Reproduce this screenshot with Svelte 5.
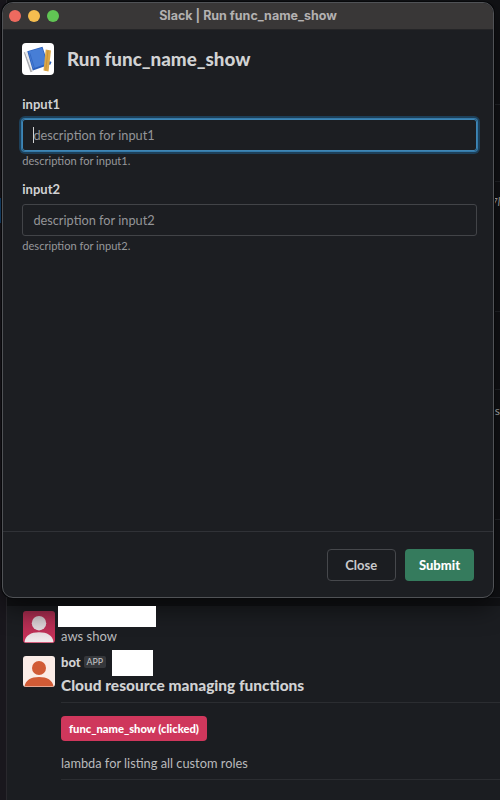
<script>
  const fields = [
    { id: 'input1', hint: 'description for input1', focused: true },
    { id: 'input2', hint: 'description for input2', focused: false }
  ];
</script>

<main class="desktop">
  <aside class="rail"><span class="selected"></span></aside>
  <section class="chat">
    <div class="behind">
      <span class="rule r1"></span>
      <span class="rule r2"></span>
      <span class="scrap s1">7l</span>
      <span class="scrap s2">s</span>
      <span class="rule r4"></span>
      <span class="rule r5"></span>
      <span class="rule r6"></span>
      <span class="rule r3"></span>
    </div>
    <article class="message first">
      <svg class="avatar" viewBox="0 0 32 32">
        <defs>
          <linearGradient id="rose" x1="0" y1="0" x2="0" y2="1">
            <stop offset="0" stop-color="#a62c4e" /><stop offset="1" stop-color="#cb3159" />
          </linearGradient>
          <linearGradient id="pale" gradientUnits="userSpaceOnUse" x1="0" y1="4" x2="0" y2="32">
            <stop offset="0" stop-color="#cbc2c6" /><stop offset="1" stop-color="#f4ebee" />
          </linearGradient>
        </defs>
        <rect width="32" height="32" rx="3" fill="url(#rose)" />
        <circle cx="16" cy="12.2" r="7.2" fill="url(#pale)" />
        <path d="M1.5 31.200C2.200 24.500 8 21.300 16 21.300S29.800 24.500 30.500 31.200Z" fill="url(#pale)" />
      </svg>
      <div class="body">
        <div class="redacted name"></div>
        <p class="text">aws show</p>
      </div>
    </article>
    <article class="message second">
      <svg class="avatar" viewBox="0 0 32 32">
        <rect width="32" height="31" rx="3" fill="#fbece7" />
        <circle cx="16" cy="12" r="7" fill="#d15b36" />
        <path d="M1.500 30.500C2.500 24 8 21 16 21S29.500 24 30.500 30.500Z" fill="#d15b36" />
      </svg>
      <div class="body">
        <div class="byline"><b>bot</b><span class="badge">APP</span><span class="redacted time"></span></div>
        <h2>Cloud resource managing functions</h2>
        <div class="action"><button class="clicked">func_name_show (clicked)</button></div>
        <p class="lambda">lambda for listing all custom roles</p>
      </div>
    </article>
  </section>

  <section class="window">
    <header class="titlebar">
      <div class="lights"><i class="red"></i><i class="yellow"></i><i class="green"></i></div>
      <span class="title">Slack | Run func_name_show</span>
    </header>
    <div class="content">
      <div class="heading">
        <svg class="app" viewBox="0 0 32 32">
          <rect width="32" height="32" rx="4" fill="#fff" />
          <path d="M1.800 9.500 3 9 10.500 28.500 8.500 29.300Z" fill="#a9abb0" />
          <path d="M3 9 5.500 8 12 26.500 10 28.500Z" fill="#e8e9eb" />
          <path d="M5.300 8.200 20.500 3.800 26.500 22 10.800 27.500Z" fill="#2b60bd" />
          <path d="M6.300 8.600 20.100 4.800 25 20.500 11 25.500Z" fill="#477ed6" />
          <path d="M7.800 10.200 12.400 25" stroke="#3469c4" stroke-width="1" />
          <path d="M27.500 18 29.500 19 28.500 21.500 26.500 22Z" fill="#2b60bd" />
          <path d="M23.700 6.500 29 7.500 26.500 28.500 21.500 27.500Z" fill="#dba746" />
          <path d="M26 7.500 23.700 27.500" stroke="#c28a31" stroke-width=".7" />
        </svg>
        <h1>Run func_name_show</h1>
      </div>
      <form>
        {#each fields as field}
          <div class="field">
            <label for={field.id}>{field.id}</label>
            <div class="control" class:focused={field.focused} id={field.id}>
              {#if field.focused}<span class="caret"></span>{/if}{field.hint}
            </div>
            <small>{field.hint}.</small>
          </div>
        {/each}
      </form>
    </div>
    <footer>
      <button class="close">Close</button>
      <button class="submit">Submit</button>
    </footer>
  </section>
</main>

<style>
  :global(body) { background: #1b1d21; }
  * { box-sizing: border-box; }
  h1, h2, p { margin: 0; }
  button { font: inherit; padding: 0; }
  .desktop {
    position: relative;
    width: 500px;
    height: 800px;
    overflow: hidden;
    display: flex;
    background: #1b1d21;
    font-family: Lato, sans-serif;
    color: #d1d2d3;
  }
  .rail { width: 7px; flex: none; background: #19171d; border-right: 1px solid #29282d; padding-top: 198px; }
  .selected { display: block; width: 4px; height: 25px; background: #164a7b; }
  .chat { flex: 1; min-width: 0; }
  .behind { position: relative; height: 606px; background: #111215; }
  .rule { position: absolute; right: 0; height: 1px; background: #222428; width: 20px; }
  .r1 { top: 104px; }
  .r2 { top: 181px; }
  .r4 { top: 311px; }
  .r5 { top: 389px; }
  .r6 { top: 519px; }
  .r3 { top: 597px; width: 493px; }
  .scrap { position: absolute; right: 0; font-size: 10.5px; line-height: 14px; color: #b4b5b7; }
  .s1 { top: 195px; font-style: italic; }
  .s2 { top: 404px; font-size: 12px; }
  .message { display: flex; padding-left: 16px; }
  .avatar { width: 32px; height: 32px; flex: none; }
  .first { height: 47px; }
  .first .avatar { margin-top: 5px; }
  .second .avatar { margin-top: 3px; }
  .body { flex: 1; padding-left: 6px; }
  .redacted { background: #fff; position: relative; z-index: 2; }
  .name { width: 98px; height: 21px; margin-left: -3px; }
  .text { font-size: 13px; line-height: 19px; color: #b9babc; }
  .byline { display: flex; height: 23px; align-items: center; font-size: 13px; line-height: 18px; margin-top: -3px; }
  .byline b { font-weight: 900; }
  .badge { margin-left: 3px; width: 22px; height: 12px; border-radius: 2px; background: #35373b; color: #c4c5c7; font-size: 8.8px; line-height: 12px; text-align: center; }
  .time { width: 41px; height: 26px; margin-left: 6px; align-self: flex-start; }
  h2 { font-size: 15.45px; line-height: 18px; font-weight: 900; margin-top: 3px; height: 26px; white-space: nowrap; }
  .action { height: 50px; border-top: 1px solid #2b2d31; padding-top: 13px; }
  .clicked { width: 146px; height: 25px; border: 0; border-radius: 4px; background: #cf375c; color: #fff; font-size: 11.2px; font-weight: 900; }
  .lambda { height: 28px; font-size: 12.8px; line-height: 22px; color: #b9babc; border-bottom: 1px solid #2b2d31; }

  .window {
    position: absolute;
    left: 2px;
    top: 2px;
    width: 492px;
    height: 596px;
    border: 1px solid #505256;
    border-radius: 11px;
    overflow: hidden;
    display: flex;
    flex-direction: column;
    background: #1c1e22;
    box-shadow: 0 0 0 1px #08090b, 0 10px 24px #0008;
  }
  .titlebar { height: 27px; flex: none; background: #393737; border-bottom: 1px solid #252527; display: flex; align-items: center; justify-content: center; position: relative; }
  .lights { position: absolute; left: 6px; top: 7px; display: flex; gap: 7px; }
  .lights i { width: 12px; height: 12px; border-radius: 50%; }
  .red { background: #ee6a5f; }
  .yellow { background: #f5bd4f; }
  .green { background: #61c554; }
  .title { font: 700 12.5px/16px Inter, sans-serif; color: #b3b1b1; }
  .content { flex: 1; padding: 13px 16px 0 19px; }
  .heading { display: flex; align-items: center; height: 32px; }
  .app { width: 32px; height: 32px; }
  h1 { margin-left: 13px; font-size: 18.8px; line-height: 24px; font-weight: 900; }
  form { padding-top: 19px; }
  .field { height: 85px; }
  label { display: block; font-size: 13px; line-height: 18px; font-weight: 700; height: 25px; padding-top: 1px; padding-left: .3px; }
  .control { height: 32px; border: 1px solid #424448; border-radius: 3px; padding-left: 10.4px; font-size: 12.75px; line-height: 30px; color: #949598; position: relative; }
  .focused { border-color: #3f86b5; box-shadow: 0 0 0 1px #347aa9, 0 0 0 3px #1d405a; }
  .caret { position: absolute; left: 10px; top: 7px; width: 1px; height: 16px; background: #d1d2d3; }
  small { display: block; font-size: 11.1px; line-height: 16px; color: #97989b; padding-top: 2px; padding-left: .3px; }
  footer { height: 66px; flex: none; border-top: 1px solid #303237; padding: 17px 19px 0 0; display: flex; justify-content: flex-end; gap: 9.500px; }
  footer button { width: 69px; height: 32px; border-radius: 4px; font-size: 13px; font-weight: 700; }
  footer .close { width: 68.500px; background: #1b1d21; border: 1px solid #46484c; color: #c8c9cb; }
  .submit { border: 0; background: #357b5d; color: #fff; font-weight: 900; }
</style>
